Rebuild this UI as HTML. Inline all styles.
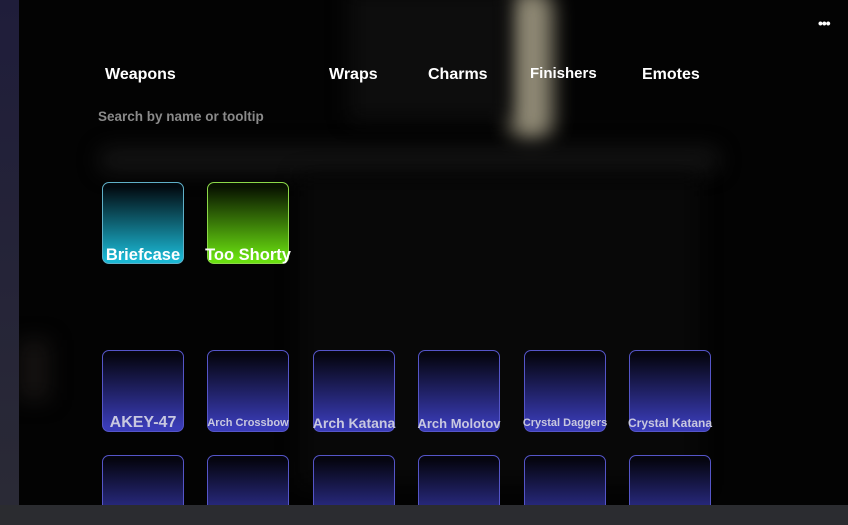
<!DOCTYPE html>
<html><head><style>
*{margin:0;padding:0;box-sizing:border-box}
body{width:848px;height:525px;overflow:hidden;background:#2b2c30;font-family:"Liberation Sans",sans-serif;position:relative}
.left{position:absolute;left:0;top:0;width:19px;height:505px;background:linear-gradient(#1f1d3a,#2a2a36)}
.main{position:absolute;left:19px;top:0;width:829px;height:505px;background:#030303;overflow:hidden}
.blur{position:absolute;filter:blur(10px)}
.t{position:absolute;color:#fff;font-weight:bold;font-size:16px;letter-spacing:0px}
.card{position:absolute;width:82px;height:82px;border-radius:7px}
.c{background:linear-gradient(#020a10 5%,#1bb8d4 95%);border:1.5px solid #5fb0c8}
.g{background:linear-gradient(#081200 5%,#6ae010 95%);border:1.5px solid #8cd848}
.b{background:linear-gradient(#050510 5%,#3a3cb8 95%);border:1.5px solid #5555c8}
.l{position:absolute;font-weight:bold;color:#fff;white-space:nowrap;text-align:center;transform:translateX(-50%)}
.lb{color:#c8c8e0}
</style></head><body>
<div class="left"></div>
<div class="main">
<div class="blur" style="left:490px;top:-10px;width:44px;height:150px;background:#bdb59a;border-radius:18px;opacity:.75"></div>
<div class="blur" style="left:330px;top:-10px;width:160px;height:130px;background:#0d0d0d"></div>
<div class="blur" style="left:80px;top:148px;width:620px;height:24px;background:#141414;border-radius:14px"></div>
<div class="blur" style="left:280px;top:175px;width:400px;height:310px;background:#080808"></div>
<div class="blur" style="left:0px;top:340px;width:30px;height:60px;background:#151211"></div>
</div>
<div class="t" style="left:105px;top:66px">Weapons</div>
<div class="t" style="left:329px;top:66px">Wraps</div>
<div class="t" style="left:428px;top:66px">Charms</div>
<div class="t" style="left:530px;top:65px;font-size:15px">Finishers</div>
<div class="t" style="left:642px;top:66px">Emotes</div>
<div style="position:absolute;left:818px;top:15px;color:#fff;font-weight:bold;font-size:14px;letter-spacing:-1px">•••</div>
<div style="position:absolute;left:98px;top:109px;color:#8a8a8a;font-weight:bold;font-size:13.5px">Search by name or tooltip</div>

<div class="card c" style="left:102px;top:182px"></div>
<div class="card g" style="left:207px;top:182px"></div>
<div class="l" style="left:143px;top:246px;font-size:16.5px">Briefcase</div>
<div class="l" style="left:248px;top:246px;font-size:16.5px">Too Shorty</div>

<div class="card b" style="left:102px;top:350px"></div>
<div class="card b" style="left:207px;top:350px"></div>
<div class="card b" style="left:313px;top:350px"></div>
<div class="card b" style="left:418px;top:350px"></div>
<div class="card b" style="left:524px;top:350px"></div>
<div class="card b" style="left:629px;top:350px"></div>
<div class="l lb" style="left:143px;top:414px;font-size:16px">AKEY-47</div>
<div class="l lb" style="left:248px;top:417px;font-size:11px">Arch Crossbow</div>
<div class="l lb" style="left:354px;top:415px;font-size:14px">Arch Katana</div>
<div class="l lb" style="left:459px;top:416px;font-size:13px">Arch Molotov</div>
<div class="l lb" style="left:565px;top:417px;font-size:11px">Crystal Daggers</div>
<div class="l lb" style="left:670px;top:416px;font-size:12px">Crystal Katana</div>

<div style="position:absolute;left:0;top:455px;width:848px;height:50px;overflow:hidden">
<div class="card b" style="left:102px;top:0"></div>
<div class="card b" style="left:207px;top:0"></div>
<div class="card b" style="left:313px;top:0"></div>
<div class="card b" style="left:418px;top:0"></div>
<div class="card b" style="left:524px;top:0"></div>
<div class="card b" style="left:629px;top:0"></div>
</div>
<div style="position:absolute;left:0;top:505px;width:848px;height:20px;background:#2b2c30"></div>
</body></html>
